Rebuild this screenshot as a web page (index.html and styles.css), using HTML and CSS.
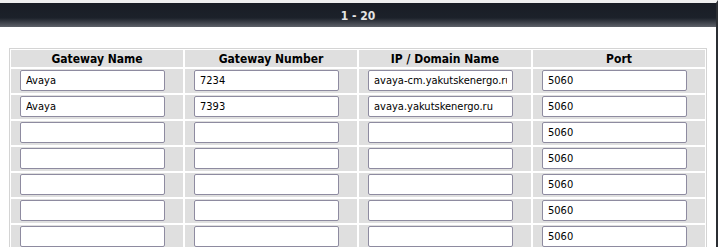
FILE: index.html
```html
<!DOCTYPE html>
<html lang="en">

<head>
    <meta charset="UTF-8">
    <title>Gateway List</title>
    <link rel="stylesheet" href="styles.css">
</head>

<body>
    <div class="page">
        <div class="title-bar">1 - 20</div>
        <table class="gateway-table">
            <thead>
                <tr>
                    <th>Gateway Name</th>
                    <th>Gateway Number</th>
                    <th>IP / Domain Name</th>
                    <th>Port</th>
                </tr>
            </thead>
            <tbody id="gateway-rows">
                <!-- rows are added below -->
            </tbody>
        </table>
    </div>

    <script>
        const gateways = [
            { name: 'Avaya', number: '7234', host: 'avaya-cm.yakutskenergo.ru', port: '5060' },
            { name: 'Avaya', number: '7393', host: 'avaya.yakutskenergo.ru', port: '5060' }
        ];

        const rows = document.getElementById('gateway-rows');

        for (let i = 0; i < 20; i++) {
            const g = gateways[i] || { name: '', number: '', host: '', port: '5060' };
            const tr = document.createElement('tr');
            [g.name, g.number, g.host, g.port].forEach(function (value) {
                const td = document.createElement('td');
                const input = document.createElement('input');
                input.type = 'text';
                input.className = 'field';
                input.value = value;
                td.appendChild(input);
                tr.appendChild(td);
            });
            rows.appendChild(tr);
        }
    </script>
</body>

</html>
```

FILE: styles.css
```css
html,
body {
    margin: 0;
    overflow: hidden;
}

body {
    font-family: "DejaVu Sans Condensed", "DejaVu Sans", sans-serif;
    font-size: 11px;
    background-color: #ffffff;
}

.page {
    width: 716px;
    min-height: 247px;
    border-right: 2px solid #2b2e33;
    border-top: 3px solid #efefef;
}

.title-bar {
    height: 24px;
    line-height: 26px;
    text-align: center;
    font-weight: bold;
    font-size: 12px;
    color: #e4e4e4;
    background: linear-gradient(#191d25 0%, #1c212a 62%, #5d6169 100%);
    margin-bottom: 21px;
}

.gateway-table {
    width: 698px;
    margin-left: 9px;
    table-layout: fixed;
    border-collapse: separate;
    border-spacing: 0;
    border: 1px solid #d4d4d4;
}

.gateway-table th {
    background-color: #dfdfdf;
    border: 1px solid #ffffff;
    height: 17px;
    padding: 0;
    font-size: 12px;
    font-weight: bold;
    color: #000000;
    text-align: center;
}

.gateway-table td {
    background-color: #dfdfdf;
    border: 1px solid #ffffff;
    padding: 1px 0 2px 9px;
    height: 21px;
}

.field {
    display: block;
    box-sizing: border-box;
    width: 145px;
    height: 21px;
    margin: 0;
    padding: 0 5px;
    border: 1px solid #8e8ba0;
    border-radius: 2px;
    background-color: #ffffff;
    font-family: "DejaVu Sans Condensed", "DejaVu Sans", sans-serif;
    font-size: 11px;
    color: #000000;
}
```
